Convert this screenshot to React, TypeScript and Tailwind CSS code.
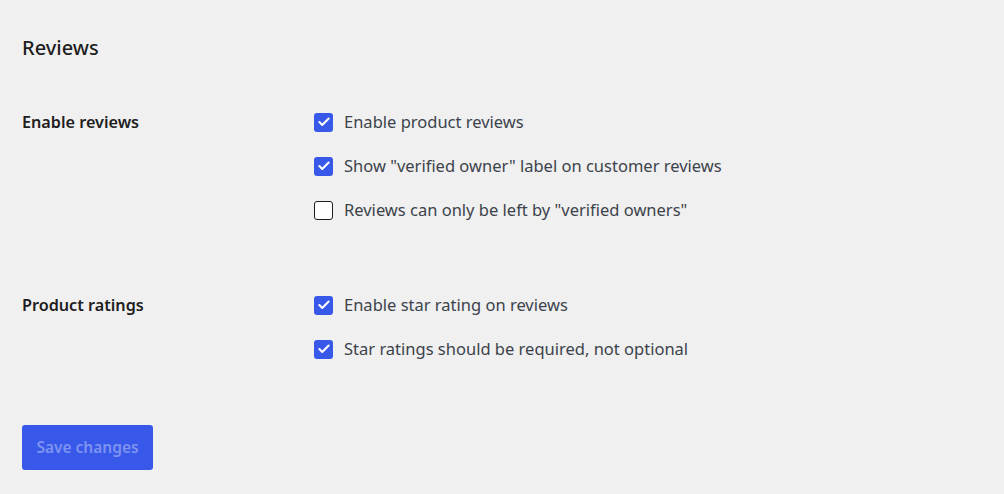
import { Check } from 'lucide-react';

const sections = [
  {
    title: 'Enable reviews',
    options: [
      { label: 'Enable product reviews', checked: true },
      { label: 'Show "verified owner" label on customer reviews', checked: true },
      { label: 'Reviews can only be left by "verified owners"', checked: false },
    ],
  },
  {
    title: 'Product ratings',
    options: [
      { label: 'Enable star rating on reviews', checked: true },
      { label: 'Star ratings should be required, not optional', checked: true },
    ],
  },
];

function Box({ checked }: { checked: boolean }) {
  return checked ? (
    <span className="flex h-[19px] w-[19px] shrink-0 items-center justify-center rounded-[3px] bg-[#3858e9]">
      <Check className="h-[14px] w-[14px] text-white" strokeWidth={3.5} />
    </span>
  ) : (
    <span className="h-[19px] w-[19px] shrink-0 rounded-[3px] border border-[#1e1e1e] bg-white" />
  );
}

export default function App() {
  return (
    <div
      className="min-h-[494px] bg-[#f0f0f1] px-[22px] pt-[35px] text-[#1e1e1e]"
      style={{ fontFamily: '"Noto Sans", sans-serif' }}
    >
      <h2 className="text-[20px] leading-[26px] font-medium">Reviews</h2>

      <div className="mt-[50px] flex flex-col gap-[73px]">
        {sections.map((s) => (
          <div key={s.title} className="flex">
            <div className="w-[292px] shrink-0 text-[16.2px] leading-[22px] font-semibold">
              {s.title}
            </div>
            <div className="flex flex-col gap-[22px]">
              {s.options.map((o) => (
                <label key={o.label} className="flex h-[22px] items-center gap-[11px] text-[16.5px] text-[#3c434a]">
                  <Box checked={o.checked} />
                  <span>{o.label}</span>
                </label>
              ))}
            </div>
          </div>
        ))}
      </div>

      <button className="mt-[65px] h-[45px] w-[131px] rounded-[3px] bg-[#3858e9] text-[15.5px] font-semibold text-[#7d92f1]">
        Save changes
      </button>
    </div>
  );
}
